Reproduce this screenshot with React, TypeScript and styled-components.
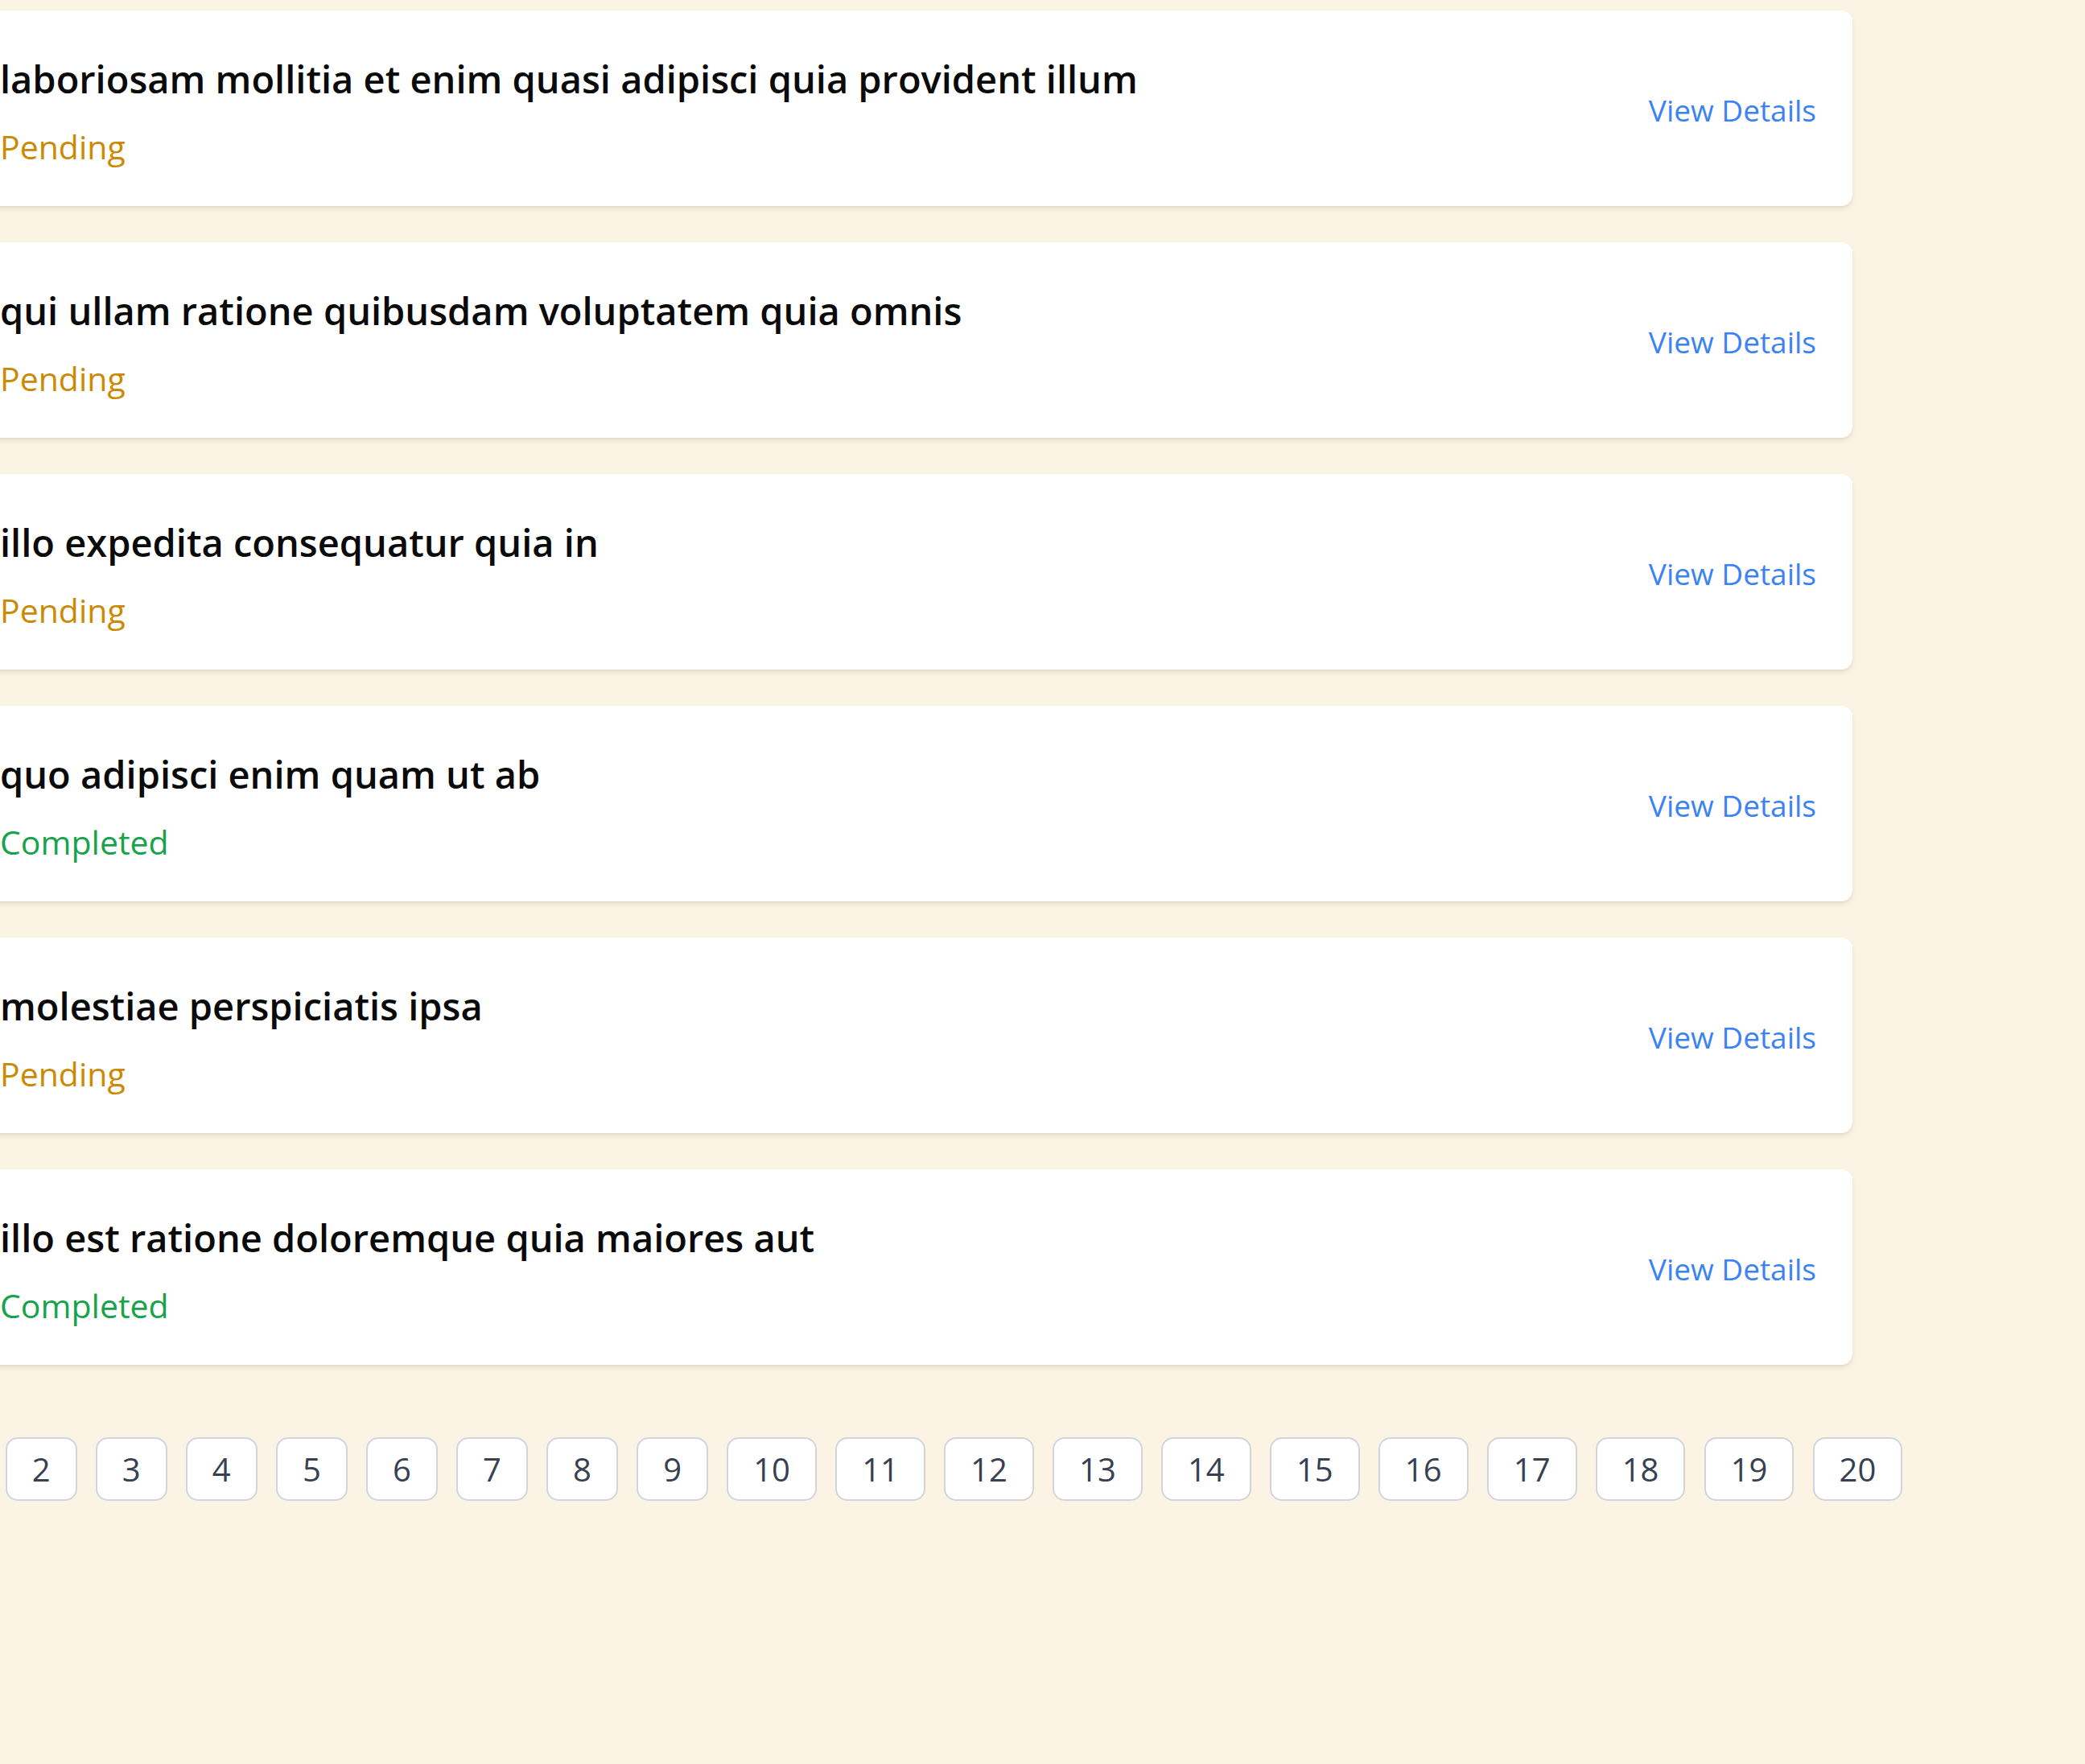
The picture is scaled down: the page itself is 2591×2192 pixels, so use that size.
import React from 'react';
import styled, { createGlobalStyle } from 'styled-components';

const GlobalStyle = createGlobalStyle`
  html, body {
    margin: 0;
    padding: 0;
    background-color: #fbf3e4;
    overflow: hidden;
  }

  body {
    font-family: 'Open Sans', 'Noto Sans', sans-serif;
    min-height: 2192px;
  }
`;

const Page = styled.main`
  width: 2345px;
  margin-left: -43px;
  padding-top: 13px;
`;

const TodoList = styled.ul`
  list-style: none;
  margin: 0;
  padding: 0;

  display: flex;
  flex-direction: column;
  gap: 45px;
`;

const Card = styled.li`
  background-color: #ffffff;
  border-radius: 14px;
  box-shadow: 0 4px 8px -2px rgba(120, 100, 70, 0.18),
    0 2px 4px -2px rgba(120, 100, 70, 0.12);

  display: flex;
  align-items: center;
  justify-content: space-between;

  height: 243px;
  box-sizing: border-box;
  padding: 7px 45px 0 43px;
`;

const Info = styled.div`
  display: flex;
  flex-direction: column;
  gap: 24px;
`;

const Title = styled.h3`
  margin: 0;
  font-size: 47px;
  font-weight: 600;
  line-height: 64px;
  color: #0a0a0a;
`;

const Status = styled.span<{ $done: boolean }>`
  font-size: 41px;
  line-height: 56px;
  color: ${({ $done }) => ($done ? '#16a34a' : '#ca8a04')};
`;

const DetailsLink = styled.a`
  font-size: 37px;
  color: #3b82f6;
  text-decoration: none;
  cursor: pointer;
  margin-top: -4px;
`;

const Pagination = styled.nav`
  display: flex;
  justify-content: center;
  gap: 23.2px;
  margin-top: 90px;
`;

const PageButton = styled.button`
  flex-shrink: 0;
  height: 79px;
  padding: 0 31px;

  background-color: #ffffff;
  border: 2px solid #d1d5db;
  border-radius: 15px;

  font-family: 'Open Sans', 'Noto Sans', sans-serif;
  font-size: 40px;
  color: #374151;
  cursor: pointer;
`;

const todos = [
  { id: 1, title: 'laboriosam mollitia et enim quasi adipisci quia provident illum', completed: false },
  { id: 2, title: 'qui ullam ratione quibusdam voluptatem quia omnis', completed: false },
  { id: 3, title: 'illo expedita consequatur quia in', completed: false },
  { id: 4, title: 'quo adipisci enim quam ut ab', completed: true },
  { id: 5, title: 'molestiae perspiciatis ipsa', completed: false },
  { id: 6, title: 'illo est ratione doloremque quia maiores aut', completed: true },
];

const pages = Array.from({ length: 20 }, (_, i) => i + 1);

export default function App() {
  return (
    <>
      <GlobalStyle />
      <Page>
        <TodoList>
          {todos.map((todo) => (
            <Card key={todo.id}>
              <Info>
                <Title>{todo.title}</Title>
                <Status $done={todo.completed}>
                  {todo.completed ? 'Completed' : 'Pending'}
                </Status>
              </Info>
              <DetailsLink>View Details</DetailsLink>
            </Card>
          ))}
        </TodoList>
        <Pagination>
          {pages.map((p) => (
            <PageButton key={p}>{p}</PageButton>
          ))}
        </Pagination>
      </Page>
    </>
  );
}
